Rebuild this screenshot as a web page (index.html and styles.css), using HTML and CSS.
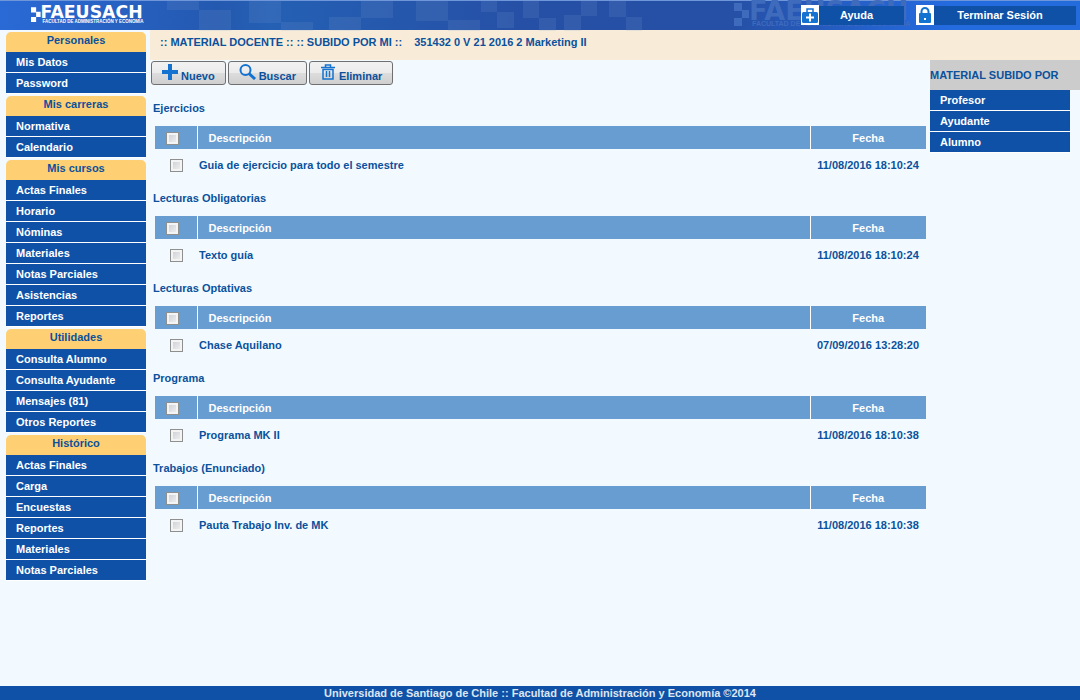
FILE: index.html
```html
<!DOCTYPE html>
<html lang="es">
<head>
<meta charset="utf-8">
<title>Material Docente</title>
<link rel="stylesheet" href="styles.css">
</head>
<body>
<header class="top">
  <svg class="pattern" width="780" height="30" viewBox="0 0 780 30" aria-hidden="true">
    <g fill="#7f9ccf" fill-opacity=".16">
      <path d="M167 0h32v9h-32zM199 9h32v21h-32zM249 0h32v22h-32zM281 21h32v9h-32zM329 16h32v14h-32zM361 0h32v17h-32zM416 0h32v20h-32zM448 19h32v11h-32z"/>
      <path d="M481 0h16v11h-16zM497 11h17v16h-17zM523 0h16v17h-16zM539 17h17v13h-17zM564 14h17v16h-17zM581 0h16v15h-16zM609 0h17v16h-17zM626 16h16v14h-16z"/>
    </g>
  </svg>
  <svg class="ghost" width="178" height="28" viewBox="0 0 178 28" aria-hidden="true">
    <path d="M0 1h8v8H0zM8 8h7v8H8zM0 16h8v8H0z"/>
    <text x="15" y="18" class="logo-name">FAEUSACH</text>
    <text x="18" y="24" class="logo-sub">FACULTAD DE ADMINISTRACIÓN Y ECONOMÍA</text>
  </svg>
  <svg class="logo" width="114" height="18" viewBox="0 0 178 28" role="img" aria-label="FAEUSACH">
    <path d="M0 2h8v8H0zM8 9h7v8H8zM0 17h8v8H0z"/>
    <text x="15" y="19" class="logo-name">FAEUSACH</text>
    <text x="18" y="26" class="logo-sub">FACULTAD DE ADMINISTRACIÓN Y ECONOMÍA</text>
  </svg>
  <nav class="session">
    <a href="#" class="help"><span class="ico"><svg width="18" height="20" viewBox="0 0 18 20"><path d="M6 8V4h6v4" fill="none" stroke="#1472d0" stroke-width="1.500"/><rect x="1" y="7" width="16" height="11" rx="1.500" fill="#1472d0"/><path d="M9 8.500v8M5 12.500h8" stroke="#fff" stroke-width="2"/></svg></span><span class="label">Ayuda</span></a>
    <a href="#" class="logout"><span class="ico"><svg width="18" height="20" viewBox="0 0 18 20"><path d="M5.500 9V6.500a3.500 3.500 0 0 1 7 0V9" fill="none" stroke="#1472d0" stroke-width="2"/><rect x="3" y="8" width="12" height="10" rx="1" fill="#1472d0"/><path d="M8 13h2v2H8z" fill="#fff"/></svg></span><span class="label">Terminar Sesión</span></a>
  </nav>
</header>
<div class="page">
  <nav class="menu">
    <h2>Personales</h2>
    <ul><li><a href="#">Mis Datos</a></li><li><a href="#">Password</a></li></ul>
    <h2>Mis carreras</h2>
    <ul><li><a href="#">Normativa</a></li><li><a href="#">Calendario</a></li></ul>
    <h2>Mis cursos</h2>
    <ul><li><a href="#">Actas Finales</a></li><li><a href="#">Horario</a></li><li><a href="#">Nóminas</a></li><li><a href="#">Materiales</a></li><li><a href="#">Notas Parciales</a></li><li><a href="#">Asistencias</a></li><li><a href="#">Reportes</a></li></ul>
    <h2>Utilidades</h2>
    <ul><li><a href="#">Consulta Alumno</a></li><li><a href="#">Consulta Ayudante</a></li><li><a href="#">Mensajes (81)</a></li><li><a href="#">Otros Reportes</a></li></ul>
    <h2>Histórico</h2>
    <ul><li><a href="#">Actas Finales</a></li><li><a href="#">Carga</a></li><li><a href="#">Encuestas</a></li><li><a href="#">Reportes</a></li><li><a href="#">Materiales</a></li><li><a href="#">Notas Parciales</a></li></ul>
  </nav>
  <div class="body">
    <h1 class="crumbs"><span>:: MATERIAL DOCENTE :: :: SUBIDO POR MI ::</span><span>351432 0 V 21 2016 2 Marketing II</span></h1>
    <div class="cols">
      <main>
        <div class="tools">
          <button type="button"><svg width="16" height="16" viewBox="0 0 16 16"><path d="M8 0v16M0 8h16" stroke="#1472d0" stroke-width="4"/></svg>Nuevo</button>
          <button type="button"><svg width="17" height="16" viewBox="0 0 17 16"><circle cx="6.500" cy="6" r="5" fill="none" stroke="#1472d0" stroke-width="2"/><path d="M10 9.500l6 5.500" stroke="#1472d0" stroke-width="3"/></svg>Buscar</button>
          <button type="button"><svg width="16" height="16" viewBox="0 0 16 16"><path d="M1 3.500h14M5.500 3V1h5v2M3 5.500h10v9.500h-10zM6.500 7v6M9.500 7v6" fill="none" stroke="#1472d0" stroke-width="1.500"/></svg>Eliminar</button>
        </div>
        <section><h3>Ejercicios</h3>
          <table><thead><tr><th class="c"><input type="checkbox" aria-label="Seleccionar todo"></th><th class="d">Descripción</th><th class="f">Fecha</th></tr></thead>
          <tbody><tr><td class="c"><input type="checkbox" id="m1"></td><td><label for="m1">Guia de ejercicio para todo el semestre</label></td><td class="f">11/08/2016 18:10:24</td></tr></tbody></table></section>
        <section><h3>Lecturas Obligatorias</h3>
          <table><thead><tr><th class="c"><input type="checkbox" aria-label="Seleccionar todo"></th><th class="d">Descripción</th><th class="f">Fecha</th></tr></thead>
          <tbody><tr><td class="c"><input type="checkbox" id="m2"></td><td><label for="m2">Texto guía</label></td><td class="f">11/08/2016 18:10:24</td></tr></tbody></table></section>
        <section><h3>Lecturas Optativas</h3>
          <table><thead><tr><th class="c"><input type="checkbox" aria-label="Seleccionar todo"></th><th class="d">Descripción</th><th class="f">Fecha</th></tr></thead>
          <tbody><tr><td class="c"><input type="checkbox" id="m3"></td><td><label for="m3">Chase Aquilano</label></td><td class="f">07/09/2016 13:28:20</td></tr></tbody></table></section>
        <section><h3>Programa</h3>
          <table><thead><tr><th class="c"><input type="checkbox" aria-label="Seleccionar todo"></th><th class="d">Descripción</th><th class="f">Fecha</th></tr></thead>
          <tbody><tr><td class="c"><input type="checkbox" id="m4"></td><td><label for="m4">Programa MK II</label></td><td class="f">11/08/2016 18:10:38</td></tr></tbody></table></section>
        <section><h3>Trabajos (Enunciado)</h3>
          <table><thead><tr><th class="c"><input type="checkbox" aria-label="Seleccionar todo"></th><th class="d">Descripción</th><th class="f">Fecha</th></tr></thead>
          <tbody><tr><td class="c"><input type="checkbox" id="m5"></td><td><label for="m5">Pauta Trabajo Inv. de MK</label></td><td class="f">11/08/2016 18:10:38</td></tr></tbody></table></section>
      </main>
      <aside>
        <h2>MATERIAL SUBIDO POR</h2>
        <ul><li><a href="#">Profesor</a></li><li><a href="#">Ayudante</a></li><li><a href="#">Alumno</a></li></ul>
      </aside>
    </div>
  </div>
</div>
<footer>Universidad de Santiago de Chile :: Facultad de Administración y Economía ©2014</footer>
</body>
</html>
```
FILE: styles.css
```css
* { box-sizing: border-box; }
body {
  margin: 0;
  min-height: 100vh;
  display: flex;
  flex-direction: column;
  background: #f2faff;
  color: #0b519c;
  font: bold 11px/20px "Liberation Sans", Arial, sans-serif;
}
h1, h2, h3, ul { margin: 0; padding: 0; font-size: 11px; list-style: none; }
a { color: inherit; text-decoration: none; }
svg { display: block; }

.top {
  position: relative;
  height: 30px;
  display: flex;
  justify-content: space-between;
  align-items: center;
  padding: 0 4px 1px 31px;
  border-top: 1px solid #6f96d8;
  background: linear-gradient(90deg, #2a6ad6 0, #2459b0 20%, #2460b4 25%, #2650a6 48%, #2650a6 68%, #246be0 88%, #246bdc 100%);
}
.pattern { position: absolute; left: 0; top: 0; }
.ghost { position: absolute; right: 168px; top: 1px; fill: #3f6bbd; overflow: visible; }
.logo { position: relative; fill: #fff; overflow: visible; }
.logo-name { font: bold 27px "DejaVu Sans", Verdana, sans-serif; }
.logo-sub { font: bold 7px "Liberation Sans", Arial, sans-serif; }
.session { position: relative; display: flex; gap: 12px; color: #fff; text-align: center; }
.session a { display: flex; align-items: flex-end; }
.session .ico { background: #fff; }
.session .label { background: #0f51a7; line-height: 19px; }
.help .label { width: 85px; padding-right: 10px; }
.logout .label { width: 142px; padding-right: 10px; }

.page { flex: 1; display: flex; }
.menu { width: 146px; padding: 2px 0 0 6px; margin-right: 4px; }
.menu h2 {
  height: 20px;
  line-height: 16px;
  text-align: center;
  background: #ffcf73;
  border-radius: 5px 5px 0 0;
}
.menu ul { margin-bottom: 2px; }
li { border-bottom: 1px solid #fff; }
li a { display: block; padding-left: 10px; background: #0f51a7; color: #fff; }

.body { flex: 1; }
.crumbs {
  display: flex;
  gap: 12px;
  height: 30px;
  padding-left: 10px;
  line-height: 24px;
  background: #f8ecd9;
}
.cols { display: flex; gap: 4px; }
main { flex: 1; }
.tools { display: flex; gap: 2px; padding: 1px 0 0 1px; margin-bottom: 13px; }
.tools button {
  display: flex;
  gap: 3px;
  height: 24px;
  padding: 2px 10px;
  border: 1px solid #707070;
  border-radius: 3px;
  background: linear-gradient(#f2f2f2 0, #ebebeb 50%, #dddddd 50%, #cfcfcf 100%);
  color: #0b519c;
  font: inherit;
  line-height: 24px;
}
section { margin-bottom: 12px; }
h3 { padding-left: 3px; line-height: 20px; margin-bottom: 8px; }
table { width: calc(100% - 5px); margin-left: 5px; border-collapse: collapse; }
th, td { padding: 0; text-align: left; }
th { height: 23px; padding-top: 1px; background: #689dd2; color: #fff; line-height: 22px; }
td { height: 27px; padding-top: 5px; line-height: 22px; }
th.c { width: 42px; padding-left: 11px; border-right: 1px solid #fff; }
td.c { padding-left: 15px; }
th.d { padding-left: 11px; }
td label { padding-left: 2px; }
th.f { width: 116px; border-left: 1px solid #fff; text-align: center; }
td.f { text-align: center; white-space: nowrap; }
input[type="checkbox"] {
  appearance: none;
  display: block;
  width: 13px;
  height: 13px;
  margin: 0;
  border: 1px solid #8e8f8f;
  background: linear-gradient(135deg, #c8ccd2, #f4f4f4);
  box-shadow: inset 0 0 0 2px #f4f4f4;
}
aside { width: 150px; }
aside h2 { height: 30px; line-height: 30px; background: #ccc; }
aside ul { width: 140px; }

footer { background: #0f51a7; color: #dde6f2; text-align: center; line-height: 14px; }
```
